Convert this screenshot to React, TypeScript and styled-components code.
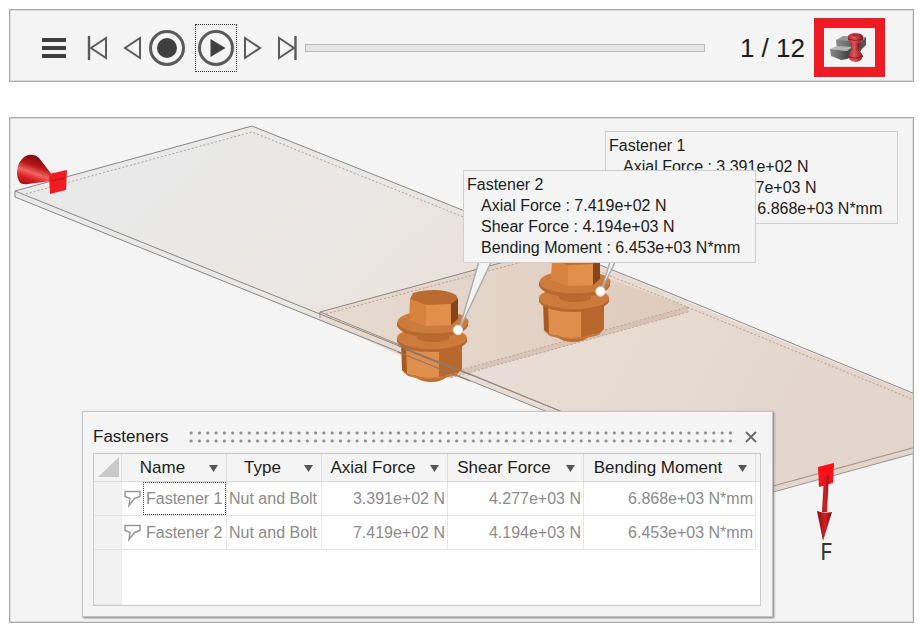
import React from "react";
import styled, { createGlobalStyle } from "styled-components";

const GlobalStyle = createGlobalStyle`
  *, *::before, *::after { box-sizing: border-box; }
  body {
    margin: 0;
    background: #fff;
    color: #1c1c1c;
    font-family: "Liberation Sans", Arial, sans-serif;
    font-size: 16px;
  }
  button, input { font: inherit; color: inherit; }
`;

const Page = styled.main`
  display: flex;
  flex-direction: column;
  gap: 35px;
  min-height: 100vh;
  padding: 9px 5px 7px 9px;
`;

const Toolbar = styled.header`
  display: flex;
  align-items: center;
  padding: 8px 28px 4px 22px;
  border: 1px solid #a9a9a9;
  background: #f4f4f4;
  box-shadow: inset 0 0 0 1px #dedede;
`;

const ToolButton = styled.button<{ $width: number }>`
  display: flex;
  flex: none;
  align-items: center;
  justify-content: center;
  width: ${(p) => p.$width}px;
  height: 48px;
  padding: 0;
  border: 0;
  background: none;
`;

const PlayButton = styled(ToolButton)`
  margin-left: 5px;
  border: 1px dotted #333;
`;

const Timeline = styled.input`
  appearance: none;
  flex: 1;
  min-width: 40px;
  height: 8px;
  margin: 0 0 0 1px;
  border: 1px solid #bdbdbd;
  background: #e4e4e4;
  &::-webkit-slider-thumb {
    appearance: none;
    width: 1px;
    height: 6px;
    background: #e4e4e4;
  }
`;

const Counter = styled.output`
  margin: 0 9px 0 35px;
  font-size: 26px;
  line-height: 30px;
  white-space: nowrap;
`;

const FastenerButton = styled.button`
  display: flex;
  flex: none;
  align-items: center;
  justify-content: center;
  width: 71px;
  height: 59px;
  padding: 0;
  border: 10px solid #ed1c24;
  background: #f4f4f4;
`;

const Viewport = styled.section`
  position: relative;
  display: flex;
  flex: 1;
  min-height: 506px;
  overflow: hidden;
  border: 1px solid #a9a9a9;
  background: #f4f4f4;
  box-shadow: inset 0 0 0 1px #dedede;
`;

const Scene = styled.svg`
  flex: 1;
  width: 100%;
  overflow: visible;
`;

const Note = styled.aside<{ $x: number; $y: number }>`
  position: absolute;
  left: ${(p) => p.$x}px;
  top: ${(p) => p.$y}px;
  width: 293px;
  padding: 3px 3px 4px;
  border: 1px solid #cfcfcf;
  background: #f4f4f4;
  line-height: 21px;
  white-space: nowrap;
`;

const NoteTitle = styled.h3`
  margin: 0;
  font-size: 16px;
  font-weight: 400;
`;

const NoteList = styled.ul`
  margin: 0;
  padding: 0 0 0 14px;
  list-style: none;
`;

const Panel = styled.section`
  position: absolute;
  left: 72px;
  bottom: 5px;
  width: 691px;
  padding: 0 11px 10px 10px;
  border: 1px solid #c4c4c4;
  background: #f4f4f4;
  box-shadow: 1px 1px 2px 0 #777;
`;

const PanelHeader = styled.div`
  display: flex;
  align-items: center;
  height: 41px;
  padding-top: 8px;
`;

const PanelTitle = styled.h2`
  width: 94px;
  margin: 0;
  font-size: 17px;
  font-weight: 400;
`;

const Grip = styled.div`
  flex: 1;
  height: 16px;
  margin-right: 6px;
  background-image: radial-gradient(circle, #8d8d8d 1px, transparent 2px);
  background-size: calc(100% / 66) 8px;
`;

const CloseButton = styled.button`
  display: flex;
  align-items: center;
  justify-content: center;
  width: 20px;
  height: 20px;
  padding: 0;
  border: 0;
  background: none;
`;

const TableFrame = styled.div`
  border: 1px solid #c9c9c9;
  background: #fff;
`;

const Table = styled.table`
  width: 100%;
  border-collapse: separate;
  border-spacing: 0;
  table-layout: fixed;
`;

const Column = styled.col<{ $width?: number }>`
  width: ${(p) => (p.$width ? `${p.$width}px` : "auto")};
`;

const HeadCell = styled.th`
  height: 28px;
  padding: 0;
  border-right: 1px solid #dedede;
  border-bottom: 1px solid #dadada;
  background: #f4f4f4;
  font-size: 17px;
  font-weight: 400;
  text-align: right;
  &:last-child { border-right: 0; }
`;

const HeadContent = styled.div`
  display: flex;
  align-items: center;
`;

const HeadLabel = styled.span`
  flex: 1;
  text-align: center;
  white-space: nowrap;
`;

const FilterButton = styled.button`
  display: flex;
  align-items: center;
  justify-content: center;
  width: 20px;
  height: 20px;
  margin-right: 3px;
  padding: 2px 0 0;
  border: 0;
  background: none;
`;

const Gutter = styled.td`
  padding: 0;
  border-right: 1px solid #ececec;
  border-bottom: 1px solid #e3e3e3;
  background: #f2f2f2;
`;

const Cell = styled.td<{ $numeric?: boolean }>`
  height: 34px;
  padding: 0 2px;
  border-right: 1px solid #e6e6e6;
  border-bottom: 1px solid #e3e3e3;
  color: #8b8b8b;
  text-align: ${(p) => (p.$numeric ? "right" : "left")};
  white-space: nowrap;
`;

const NameCell = styled(Cell)`
  padding: 0;
`;

const NameContent = styled.div`
  display: flex;
  align-items: center;
  padding-left: 2px;
`;

const NameText = styled.span<{ $focused: boolean }>`
  flex: 1;
  height: 33px;
  margin-left: 2px;
  padding-left: 2px;
  border: 1px dotted ${(p) => (p.$focused ? "#444" : "transparent")};
  line-height: 31px;
`;

const EmptyRow = styled.tr`
  height: 55px;
`;

const fasteners = [
  { name: "Fastener 1", type: "Nut and Bolt", axial: "3.391e+02 N", shear: "4.277e+03 N", bending: "6.868e+03 N*mm", x: 595, y: 13 },
  { name: "Fastener 2", type: "Nut and Bolt", axial: "7.419e+02 N", shear: "4.194e+03 N", bending: "6.453e+03 N*mm", x: 453, y: 52 },
];

const columns = ["Name", "Type", "Axial Force", "Shear Force", "Bending Moment"];

const GLYPH = "#5a5a5a";

function StepIcon({ back, end }: { back?: boolean; end?: boolean }) {
  return (
    <svg width="24" height="26" viewBox="0 0 24 26" fill="none" stroke={GLYPH} strokeWidth="2">
      {back ? <path d="M20 3 L5 13 L20 23 Z" /> : <path d="M4 3 L19 13 L4 23 Z" />}
      {end && (back ? <path d="M3 1 V25" strokeWidth="2.4" /> : <path d="M20.500 1 V25" strokeWidth="2.4" />)}
    </svg>
  );
}

function FastenerIcon() {
  return (
    <svg width="42" height="34" viewBox="0 0 42 34">
      <defs>
        <linearGradient id="boltRed" x1="0" x2="1">
          <stop offset="0" stopColor="#b9262d" />
          <stop offset=".4" stopColor="#e0555b" />
          <stop offset="1" stopColor="#8f1418" />
        </linearGradient>
        <linearGradient id="steel" x1="0" x2="1">
          <stop offset="0" stopColor="#8a8a8a" />
          <stop offset="1" stopColor="#4a4a4a" />
        </linearGradient>
      </defs>
      <path d="M7 9 L14 5 L37 6 L32 11 L8 10 Z" fill="#969696" />
      <path d="M7 9 L32 11 V20 L8 18 Z" fill="url(#steel)" />
      <path d="M32 11 L37 6 V14 L32 19 Z" fill="#555" />
      <path d="M1 18 L8 15 L25 16 L18 20 Z" fill="#b5b5b5" />
      <path d="M1 18 L18 20 V28 L12 29 L2 25 Z" fill="url(#steel)" />
      <path d="M18 20 L25 15 V25 L18 28 Z" fill="#484848" />
      <rect x="22" y="7" width="8" height="22" fill="url(#boltRed)" />
      <path d="M19 5 Q21 2 26 2 Q32 2 34 5 V9 L30 12 H22 L19 9 Z" fill="url(#boltRed)" />
      <path d="M22 20 H31 L34 25 L32 29 Q27 33 21 29 L19 25 Z" fill="url(#boltRed)" />
      <path d="M19 8 Q26 11 34 8 M19 25 Q26 29 34 25" fill="none" stroke="#8f1a20" strokeWidth="1" />
      <ellipse cx="26.500" cy="4" rx="4" ry="1.300" fill="#a92b32" />
    </svg>
  );
}

function Bolt() {
  return (
    <g>
      <path d="M413 370 H447 V376 Q443 382 430 382 Q419 382 413 375 Z" fill="#bd6d32" />
      <path d="M401 342 L407 345 V374 L402 370 Z" fill="#a65a22" />
      <path d="M406 344 L439 349 V377 Q430 379 420 377 L407 373 Z" fill="#e08e4c" />
      <path d="M439 349 L462 342 V369 L458 373 L439 377 Z" fill="#b8682c" />
      <path d="M401 370 L407 373 L420 377 Q430 379 439 377 L458 373 L462 368 L457 375 L440 379 L420 379 L408 376 Z" fill="#c6763a" />
      <path d="M397 338 V342 Q404 352 432 352 Q460 352 467 342 V338 Z" fill="#b7682d" />
      <ellipse cx="432" cy="338" rx="35" ry="11" fill="#cc7b3c" />
      <path d="M417 330 H449 V339 Q444 342 433 342 Q420 342 417 338 Z" fill="#ba6a2e" />
      <path d="M397 322 V326 Q403 337 433 337 Q462 337 468 326 V322 Z" fill="#b7682d" />
      <ellipse cx="433" cy="322" rx="35.500" ry="11.500" fill="#cc7b3c" />
      <path d="M410 299 L426 303 V326 L409 320 Z" fill="#d8843f" />
      <path d="M426 303 L451 303 V325 L426 326 Z" fill="#e28f4c" />
      <path d="M451 303 L458 298 V319 L451 325 Z" fill="#85451b" />
      <path d="M410 299 L413 293 Q422 290 434 290 Q447 290 456 295 L458 299 L451 304 L426 305 Z" fill="#bb6b31" />
    </g>
  );
}

function ModelScene() {
  return (
    <Scene role="img" aria-label="Bolted plates with applied load">
      <defs>
        <linearGradient id="plateA" gradientUnits="userSpaceOnUse" x1="180" y1="130" x2="420" y2="380">
          <stop offset="0" stopColor="#e9e9e9" />
          <stop offset=".5" stopColor="#eae7e4" />
          <stop offset="1" stopColor="#e9dfd7" />
        </linearGradient>
        <linearGradient id="plateB" gradientUnits="userSpaceOnUse" x1="440" y1="270" x2="820" y2="480">
          <stop offset="0" stopColor="#eadfd7" />
          <stop offset="1" stopColor="#e3d5cb" />
        </linearGradient>
        <linearGradient id="overlap" gradientUnits="userSpaceOnUse" x1="340" y1="300" x2="680" y2="310">
          <stop offset="0" stopColor="#e6dad1" />
          <stop offset="1" stopColor="#dfcbbc" />
        </linearGradient>
        <linearGradient id="cone" gradientUnits="userSpaceOnUse" x1="36" y1="156" x2="25" y2="188">
          <stop offset="0" stopColor="#7d090c" />
          <stop offset=".28" stopColor="#b81519" />
          <stop offset=".5" stopColor="#f0645f" />
          <stop offset=".7" stopColor="#d81d20" />
          <stop offset="1" stopColor="#8d0b0e" />
        </linearGradient>
        <linearGradient id="arrow" gradientUnits="userSpaceOnUse" x1="817" y1="0" x2="832" y2="0">
          <stop offset="0" stopColor="#8f0d10" />
          <stop offset=".55" stopColor="#cf2024" />
          <stop offset="1" stopColor="#7b0b0d" />
        </linearGradient>
      </defs>
      <g transform="translate(-10 -118)">
        <path d="M15 191 L252 126 L688 301 V312 L460 377 L15 197 Z" fill="url(#plateA)" />
        <path d="M320 312 L553 247 L1110 475 L1000 431 L912 454 L700 511 L650 453 L320 319 Z" fill="url(#plateB)" />
        <path d="M320 312 L537 253 L688 307 V312 L450 378 L320 319 Z" fill="url(#overlap)" />
        <path d="M15 191 L252 126 L660 289 L1000 429 M15 191 L533 400 L600 427 M15 191 V197 L518 400 L580 425 M320 318 V312 L537 253" fill="none" stroke="#8b8683" strokeWidth="1" />
        <path d="M320 312 L560 411" fill="none" stroke="#9a8c82" strokeWidth="1" />
        <path d="M700 506 L1000 424 M700 512 L1000 430" fill="none" stroke="#9a8f88" strokeWidth="1" />
        <path d="M22 195 L252 132 L680 304 L912 399 M326 314 L545 256 M688 307 L450 373 M688 312 L450 378 M688 307 V312" fill="none" stroke="#b59e90" strokeWidth="1" strokeDasharray="2 2" />
        <path d="M688 307 L450 373 V378 L688 312 Z" fill="#cdb9ab" opacity=".55" />

        <g transform="translate(142 -40)"><Bolt /></g>
        <Bolt />
        <path d="M398 345.500 L470 374.500 M398 352 L470 381 M404 349 L456 370" fill="none" stroke="#8e7869" strokeWidth="1.300" />

        <path d="M622 223 L634 223 L601 291 Z" fill="#f3f3f3" stroke="#aaa" strokeWidth="1.400" />
        <path d="M480 258 L493 258 L459 330 Z" fill="#f3f3f3" stroke="#aaa" strokeWidth="1.400" />
        <circle cx="600.500" cy="291.500" r="4.700" fill="#fff" stroke="#ddd" />
        <circle cx="458" cy="330" r="4.700" fill="#fff" stroke="#ddd" />

        <path d="M33 155 Q25 153 19 163 Q15 174 19 181 Q21 185 28 184 L51 181 L53 176 L39 158 Q36 155 33 155 Z" fill="url(#cone)" />
        <path d="M49 174 L67 170 L66 190 L50 194 Z" fill="#f01c20" />
        <path d="M51 181 L65 178" stroke="#bd1418" strokeWidth="1" />

        <path d="M818 467 L834 463 L833 483 L819 487 Z" fill="#fb1016" />
        <path d="M824 476 L829 475 L827 512 H822 Z" fill="url(#arrow)" />
        <path d="M817 511 Q824 514 832 512 L823 541 Z" fill="url(#arrow)" />
        <text x="820" y="560" fontFamily="Noto Sans, sans-serif" fontSize="23" fill="#333">F</text>
      </g>
    </Scene>
  );
}

function CalloutIcon() {
  return (
    <svg width="17" height="18" viewBox="0 0 17 18" fill="none" stroke="#999" strokeWidth="1.500">
      <path d="M1 1.500 H16 V6.500 L10.500 8.500 L5 15.500 L6 8.500 L1 6.500 Z" />
    </svg>
  );
}

export default function App() {
  return (
    <>
      <GlobalStyle />
      <Page>
        <Toolbar>
          <ToolButton $width={44} aria-label="Menu">
            <svg width="26" height="22" stroke="#3f3f3f" strokeWidth="4">
              <path d="M1 3 H25 M1 11 H25 M1 19 H25" />
            </svg>
          </ToolButton>
          <ToolButton $width={44} aria-label="First frame"><StepIcon back end /></ToolButton>
          <ToolButton $width={24} aria-label="Previous frame"><StepIcon back /></ToolButton>
          <ToolButton $width={46} aria-label="Record">
            <svg width="38" height="38">
              <circle cx="19" cy="19" r="16.500" fill="none" stroke={GLYPH} strokeWidth="3" />
              <circle cx="19" cy="19" r="10" fill="#3f3f3f" />
            </svg>
          </ToolButton>
          <PlayButton $width={42} aria-label="Play">
            <svg width="38" height="38">
              <circle cx="19" cy="19" r="16.500" fill="none" stroke={GLYPH} strokeWidth="3" />
              <path d="M13.500 10 L28.500 19 L13.500 28 Z" fill="#3f3f3f" />
            </svg>
          </PlayButton>
          <ToolButton $width={32} aria-label="Next frame"><StepIcon /></ToolButton>
          <ToolButton $width={35} aria-label="Last frame"><StepIcon end /></ToolButton>
          <Timeline type="range" min={1} max={12} defaultValue={1} aria-label="Frame" />
          <Counter>1 / 12</Counter>
          <FastenerButton aria-label="Fasteners"><FastenerIcon /></FastenerButton>
        </Toolbar>

        <Viewport>
          <ModelScene />
          {fasteners.map((f) => (
            <Note key={f.name} $x={f.x} $y={f.y}>
              <NoteTitle>{f.name}</NoteTitle>
              <NoteList>
                <li>Axial Force : {f.axial}</li>
                <li>Shear Force : {f.shear}</li>
                <li>Bending Moment : {f.bending}</li>
              </NoteList>
            </Note>
          ))}

          <Panel>
            <PanelHeader>
              <PanelTitle>Fasteners</PanelTitle>
              <Grip />
              <CloseButton aria-label="Close">
                <svg width="12" height="12" stroke="#6a6a6a" strokeWidth="1.800">
                  <path d="M1 1 L11 11 M11 1 L1 11" />
                </svg>
              </CloseButton>
            </PanelHeader>
            <TableFrame>
              <Table>
                <colgroup>
                  <Column $width={28} />
                  <Column $width={105} />
                  <Column $width={95} />
                  <Column $width={126} />
                  <Column $width={136} />
                  <Column $width={172} />
                  <Column />
                </colgroup>
                <thead>
                  <tr>
                    <HeadCell aria-label="Select all">
                      <svg width="26" height="21" display="block">
                        <path d="M25 0 V20 H4 Z" fill="#c9c9c9" />
                      </svg>
                    </HeadCell>
                    {columns.map((label) => (
                      <HeadCell key={label} scope="col">
                        <HeadContent>
                          <HeadLabel>{label}</HeadLabel>
                          <FilterButton aria-label={`Filter ${label}`}>
                            <svg width="9" height="7"><path d="M0 0 H9 L4.500 7 Z" fill="#555" /></svg>
                          </FilterButton>
                        </HeadContent>
                      </HeadCell>
                    ))}
                    <HeadCell as="td" />
                  </tr>
                </thead>
                <tbody>
                  {fasteners.map((f, i) => (
                    <tr key={f.name}>
                      <Gutter />
                      <NameCell>
                        <NameContent>
                          <CalloutIcon />
                          <NameText $focused={i === 0}>{f.name}</NameText>
                        </NameContent>
                      </NameCell>
                      <Cell>{f.type}</Cell>
                      <Cell $numeric>{f.axial}</Cell>
                      <Cell $numeric>{f.shear}</Cell>
                      <Cell $numeric>{f.bending}</Cell>
                      <td />
                    </tr>
                  ))}
                  <EmptyRow>
                    <Gutter />
                    <td colSpan={6} />
                  </EmptyRow>
                </tbody>
              </Table>
            </TableFrame>
          </Panel>
        </Viewport>
      </Page>
    </>
  );
}
